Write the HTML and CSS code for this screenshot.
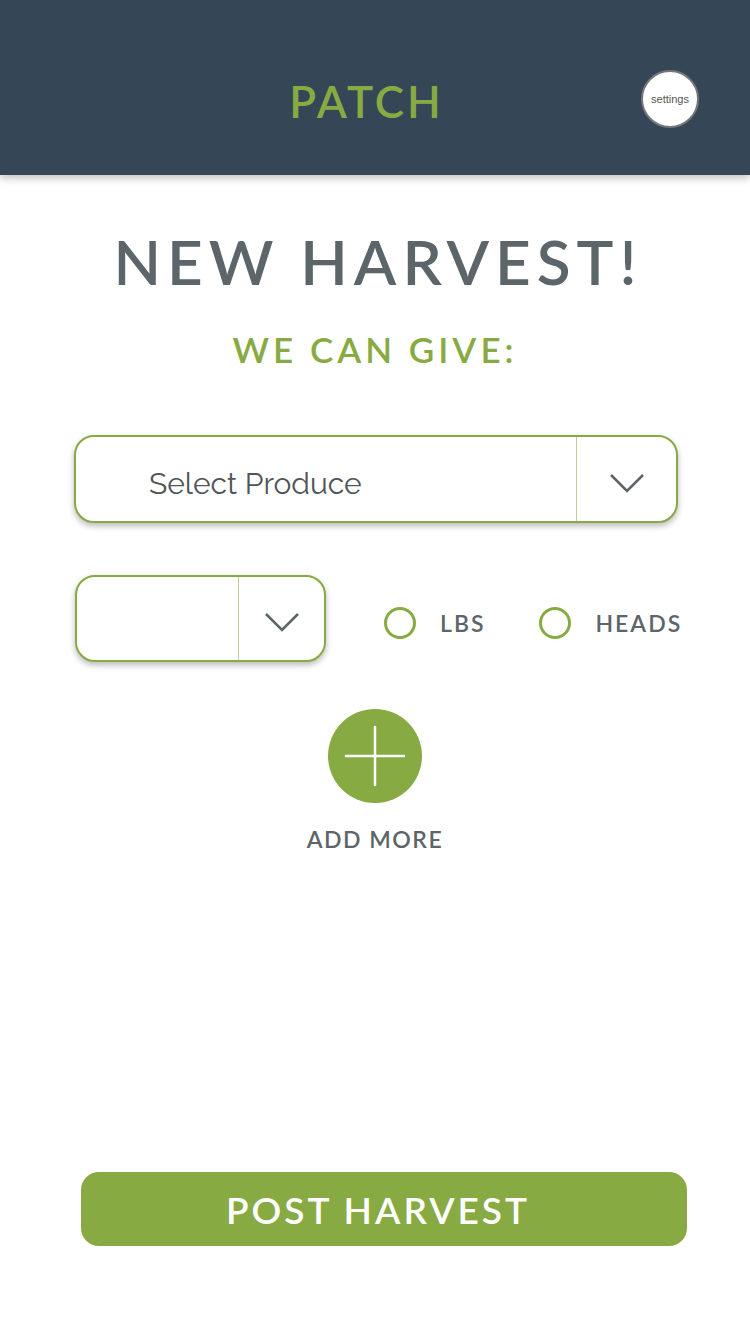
FILE: index.html
```html
<!DOCTYPE html>
<html>
<head>
<meta charset="utf-8">
<link rel="stylesheet" href="styles.css">
</head>
<body>
<div class="page">
  <header class="topbar">
    <div class="brand">PATCH</div>
    <div class="settings">settings</div>
  </header>
  <main class="content">
    <h1 class="title">NEW HARVEST!</h1>
    <h2 class="subtitle">WE CAN GIVE:</h2>
    <div class="select select-wide">
      <div class="select-value">Select Produce</div>
      <div class="select-arrow">
        <svg width="36" height="20" viewBox="0 0 36 20"><polyline points="2,2 18,18 34,2" fill="none" stroke="#5c6569" stroke-width="2.5"/></svg>
      </div>
    </div>
    <div class="qty-row">
      <div class="select select-small">
        <div class="select-value"></div>
        <div class="select-arrow">
          <svg width="36" height="20" viewBox="0 0 36 20"><polyline points="2,2 18,18 34,2" fill="none" stroke="#5c6569" stroke-width="2.5"/></svg>
        </div>
      </div>
      <div class="radio-group">
        <div class="radio"><span class="radio-dot"></span><span class="radio-label">LBS</span></div>
        <div class="radio"><span class="radio-dot"></span><span class="radio-label">HEADS</span></div>
      </div>
    </div>
    <div class="add-more">
      <div class="add-btn">
        <svg width="94" height="94" viewBox="0 0 94 94"><line x1="18" y1="47" x2="76" y2="47" stroke="#fff" stroke-width="2.5" stroke-linecap="round"/><line x1="47" y1="18" x2="47" y2="76" stroke="#fff" stroke-width="2.5" stroke-linecap="round"/></svg>
      </div>
      <div class="add-label">ADD MORE</div>
    </div>
    <div class="spacer"></div>
    <button class="post">POST HARVEST</button>
  </main>
</div>
</body>
</html>
```

FILE: styles.css
```css
* { box-sizing: border-box; }
html, body { margin: 0; padding: 0; background: #fff; }
body { font-family: "Lato", "Open Sans", sans-serif; }
.page { width: 750px; height: 1334px; display: flex; flex-direction: column; overflow: hidden; }
.topbar {
  height: 175px; background: #354757; position: relative;
  display: flex; align-items: center; justify-content: center;
  box-shadow: 0 3px 8px rgba(0,0,0,0.25);
  flex-shrink: 0;
}
.brand {
  color: #88aa42; font-size: 44px; font-weight: 600; letter-spacing: 3px;
  margin-left: -17px; margin-top: 26px;
}
.settings {
  position: absolute; left: 641px; top: 70px; width: 58px; height: 58px;
  border-radius: 50%; background: #fff; border: 2px solid #777;
  display: flex; align-items: center; justify-content: center;
  font-family: "Liberation Sans", Arial, sans-serif; font-size: 11px; color: #555;
}
.content { flex: 1; display: flex; flex-direction: column; align-items: center; padding: 0 0 88px; }
.title {
  margin: 46px 0 0 6px; font-size: 62px; font-weight: 600; color: #5c6569;
  letter-spacing: 6px; line-height: 80px;
}
.subtitle {
  margin: 26px 0 0; font-size: 35px; font-weight: 600; color: #88aa42;
  letter-spacing: 4px; line-height: 44px;
}
.select {
  display: flex; border: 2px solid #88aa42; border-radius: 20px; background: #fff;
  box-shadow: 0 3px 6px rgba(0,0,0,0.28); flex-shrink: 0;
}
.select-wide { width: 604px; height: 88px; margin: 64px 0 0 2px; }
.select-small { width: 251px; height: 87px; }
.select-value {
  flex: 1; display: flex; align-items: center; padding: 8px 0 0 73px;
  font-family: "Raleway", "Lato", sans-serif; font-size: 30px; font-weight: 400; color: #4f5558;
}
.select-arrow {
  width: 100px; border-left: 1.5px solid #bcd19a; padding-top: 8px;
  display: flex; align-items: center; justify-content: center;
}
.select-small .select-arrow { width: 86px; padding-top: 6px; }
.qty-row { width: 602px; margin: 52px 0 0 2px; display: flex; align-items: center; }
.radio-group { display: flex; margin: 8px 0 0 58px; gap: 54px; }
.radio { display: flex; align-items: center; gap: 24px; }
.radio-dot { width: 32px; height: 32px; border-radius: 50%; border: 3px solid #88aa42; flex-shrink: 0; }
.radio-label { font-size: 23px; font-weight: 600; color: #5c6569; letter-spacing: 2px; }
.add-more { display: flex; flex-direction: column; align-items: center; margin-top: 47px; }
.add-btn { width: 94px; height: 94px; border-radius: 50%; background: #88aa42; }
.add-btn svg { display: block; }
.add-label { margin-top: 21px; font-size: 23px; font-weight: 600; color: #5c6569; letter-spacing: 1.5px; line-height: 30px; }
.spacer { flex: 1; }
.post {
  width: 606px; height: 74px; border: none; border-radius: 18px; background: #88aa42;
  color: #fff; font-family: "Lato", sans-serif; font-size: 37px; font-weight: 600; letter-spacing: 3px;
  margin-left: 18px; padding: 0 12px 0 0;
}
```
